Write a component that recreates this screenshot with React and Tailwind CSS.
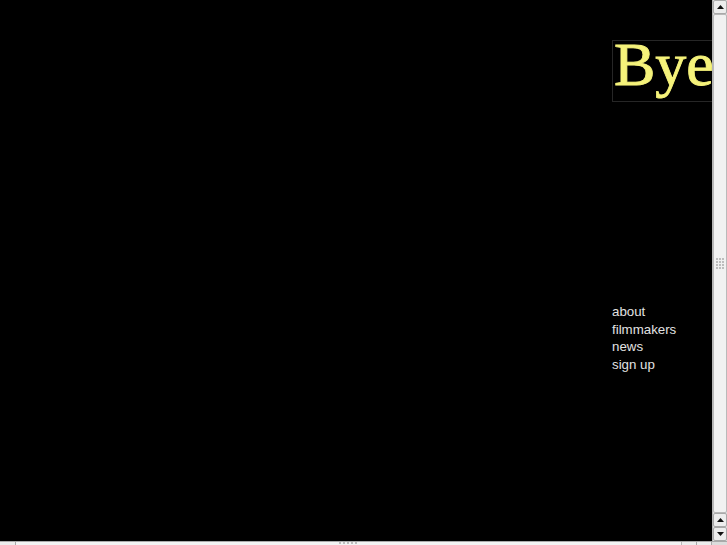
import { useState } from "react";

const links = ["about", "filmmakers", "news", "sign up"];

function Arrow({ down }) {
	return (
		<svg width="7" height="4" viewBox="0 0 7 4" className="block">
			<path d={down ? "M0 0h7L3.5 4z" : "M0 4h7L3.5 0z"} fill="#111" />
		</svg>
	);
}

function ScrollButton({ down }) {
	return (
		<div className="h-[14px] flex items-center justify-center bg-[#ededed] border border-[#a9a9a9] rounded-[2px]">
			<Arrow down={down} />
		</div>
	);
}

export default function App() {
	const [active, setActive] = useState(null);

	return (
		<div className="w-[727px] h-[545px] overflow-hidden flex flex-col bg-black font-['Liberation_Sans',Arial,sans-serif]">
			<div className="flex flex-1 min-h-0">
				{/* page content */}
				<div className="flex-1 min-w-0 overflow-hidden pl-[612px] pt-[40px]">
					<div className="w-[140px] h-[62px] border border-[#262626] pl-[1px] overflow-hidden">
						<div className="font-['Liberation_Serif','Times_New_Roman',serif] text-[62px] leading-[46px] text-[#f5f27a] [-webkit-text-stroke:0.9px_#f5f27a] whitespace-nowrap">
							Bye
						</div>
					</div>
					<ul className="mt-[201px] text-[13.3px] leading-[17.7px] text-[#e2e2e2]">
						{links.map((l) => (
							<li key={l}>
								<a
									href="#"
									onClick={(e) => {
										e.preventDefault();
										setActive(l);
									}}
									className={active === l ? "text-white" : ""}
								>
									{l}
								</a>
							</li>
						))}
					</ul>
				</div>

				{/* vertical scrollbar */}
				<div className="w-[15px] flex flex-col bg-[#dcdcdc] border-l border-[#b5b5b5]">
					<ScrollButton />
					<div className="flex-1 flex items-center justify-center bg-[#f1f1f1] border border-[#b9b9b9] rounded-[2px]">
						<div className="grid grid-cols-3 gap-[1px]">
							{Array.from({ length: 12 }).map((_, i) => (
								<span key={i} className="w-[2px] h-[2px] bg-[#bdbdbd]" />
							))}
						</div>
					</div>
					<ScrollButton />
					<ScrollButton down />
				</div>
			</div>

			{/* horizontal scrollbar, mostly cut off */}
			<div className="h-[4px] flex bg-[#dcdcdc] border-t border-[#a9a9a9]">
				<div className="w-[16px] bg-[#ededed] border-r border-[#a9a9a9]" />
				<div className="flex-1 flex justify-center bg-[#f3f3f3] border-r border-[#b9b9b9]">
					<div className="w-[20px] h-[2px] bg-[repeating-linear-gradient(90deg,#bdbdbd_0_2px,transparent_2px_4px)]" />
				</div>
				<div className="w-[15px] bg-[#ededed] border-r border-[#a9a9a9]" />
				<div className="w-[15px] bg-[#ededed] border-r border-[#a9a9a9]" />
				<div className="w-[15px] bg-[#dcdcdc]" />
			</div>
		</div>
	);
}
